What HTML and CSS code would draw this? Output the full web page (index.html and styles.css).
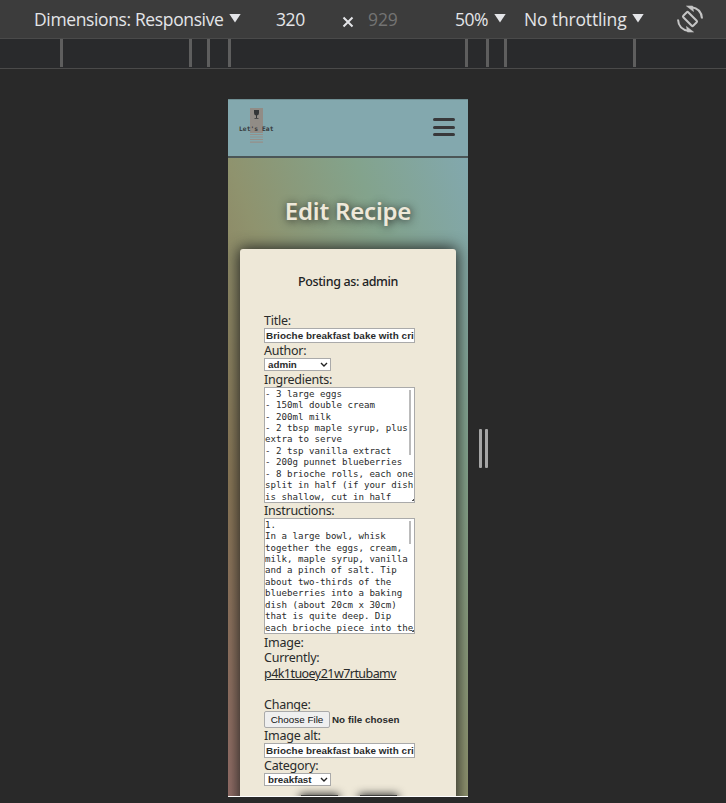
FILE: index.html
```
<!DOCTYPE html>
<html lang="en">
<head>
<meta charset="utf-8">
<title>Edit Recipe</title>
<link rel="stylesheet" href="styles.css">
</head>
<body>
<div class="toolbar">
  <span class="dims">Dimensions: Responsive</span><i class="tri"></i>
  <span class="width">320</span>
  <svg class="times" width="12" height="12" viewBox="0 0 12 12"><path d="M1.500 1.500l9 9M10.500 1.500l-9 9" stroke="#e4e5e8" stroke-width="2"/></svg>
  <span class="height">929</span>
  <span class="scale">50%</span><i class="tri"></i>
  <span class="throttle">No throttling</span><i class="tri"></i>
  <svg class="rotate" width="28" height="28" viewBox="0 0 28 28" fill="none" stroke="#c5c5c5" stroke-width="2"><rect x="10.500" y="7" width="7" height="14" rx="1" transform="rotate(-45 14 14)"/><path d="M2 14.500Q2.500 24.500 13 26M26 13.500Q25.500 3.500 15 2"/><path d="M10.500 21.500l7 5.500h-6zM17.500 6.500l-7-5.500h6z" fill="#c5c5c5" stroke-width=".6"/></svg>
</div>
<div class="ruler"><i></i><i></i><i></i><i></i><i></i><i></i><i></i><i></i></div>
<div class="stage">
  <div class="phone">
    <header class="nav">
      <svg class="logo" width="36" height="36" viewBox="0 0 36 36"><path d="M11 0h13v25H11z" fill="#918c86"/><path d="M11 26.500h13M11 29h13M11 31.500h13M11 34.200h13" stroke="#968f89" stroke-width="1.200"/><path d="M15 2h5v3q0 2-2 2.500V10h1.500v.8h-4V10H17V7.500q-2-.5-2-2.500z" fill="#343738"/><text x="0" y="22.500" textLength="34.500">Let's Eat</text></svg>
      <div class="burger"><i></i><i></i><i></i></div>
    </header>
    <main class="page">
      <h1><span>Edit Recipe</span></h1>
      <form class="card">
        <p class="posting">Posting as: admin</p>
        <label>Title:</label>
        <div class="field">Brioche breakfast bake with cri</div>
        <label>Author:</label>
        <div class="select">admin<svg width="8" height="6" viewBox="0 0 8 6"><path d="M1 1l3 3 3-3" fill="none" stroke="#222" stroke-width="1.400"/></svg></div>
        <label class="ingredients">Ingredients:</label>
        <div class="area">- 3 large eggs
- 150ml double cream
- 200ml milk
- 2 tbsp maple syrup, plus
extra to serve
- 2 tsp vanilla extract
- 200g punnet blueberries
- 8 brioche rolls, each one
split in half (if your dish
is shallow, cut in half<i class="thumb long"></i><i class="grip"></i></div>
        <label>Instructions:</label>
        <div class="area">1.
In a large bowl, whisk
together the eggs, cream,
milk, maple syrup, vanilla
and a pinch of salt. Tip
about two-thirds of the
blueberries into a baking
dish (about 20cm x 30cm)
that is quite deep. Dip
each brioche piece into the<i class="thumb"></i><i class="grip"></i></div>
        <label class="image">Image:</label>
        <label>Currently:</label>
        <a class="file-link">p4k1tuoey21w7rtubamv</a>
        <label class="change">Change:</label>
        <div class="file"><span class="choose">Choose File</span><span class="nofile">No file chosen</span></div>
        <label>Image alt:</label>
        <div class="field">Brioche breakfast bake with cri</div>
        <label>Category:</label>
        <div class="select">breakfast<svg width="8" height="6" viewBox="0 0 8 6"><path d="M1 1l3 3 3-3" fill="none" stroke="#222" stroke-width="1.400"/></svg></div>
        <div class="buttons"><i></i><i></i></div>
      </form>
    </main>
  </div>
  <div class="handle"><i></i><i></i></div>
</div>
</body>
</html>
```
FILE: styles.css
```
* { box-sizing: border-box; }
body { margin: 0; width: 726px; height: 803px; overflow: hidden; background: #292929; }
.toolbar { height: 38px; background: #3c3c3c; display: flex; align-items: center; color: #e4e5e8; font: 17.5px/38px "Open Sans", sans-serif; white-space: nowrap; }
.toolbar span { flex: none; }
.toolbar svg { flex: none; }
.dims { width: 190px; margin-left: 34px; letter-spacing: -.37px; }
.tri { flex: none; width: 12px; height: 9px; margin: 0 0 2px 5px; background: #e4e5e8; clip-path: polygon(0 0, 100% 0, 50% 100%); }
.width { width: 30px; margin-left: 35px; letter-spacing: -.4px; }
.times { margin: 6px 0 0 36px; }
.height { width: 31px; margin-left: 14px; color: #737373; letter-spacing: -.1px; }
.scale { width: 34px; margin-left: 56px; letter-spacing: -.5px; }
.throttle { width: 103px; margin-left: 18px; letter-spacing: -.15px; }
.rotate { margin-left: 32px; }
.ruler { height: 31px; border-top: 1px solid #4a4a4a; border-bottom: 1px solid #4a4a4a; background: #292a2c; display: flex; }
.ruler i { width: 3px; height: 28px; background: #5e5e5e; flex: none; margin-left: 15px; }
.ruler i:nth-child(1) { margin-left: 60px; }
.ruler i:nth-child(2) { margin-left: 126px; }
.ruler i:nth-child(4) { margin-left: 18px; }
.ruler i:nth-child(5) { margin-left: 234px; }
.ruler i:nth-child(6) { margin-left: 18px; }
.ruler i:nth-child(8) { margin-left: 126px; }
.stage { display: flex; padding: 30px 0 0 228px; }
.phone { width: 240px; height: 698px; overflow: hidden; border-bottom: 1px solid #fff; color: #292b2b; font-family: "Noto Sans", sans-serif; }
.nav { height: 59px; background: #83a8ae; border-top: 1px solid #6f8f93; border-bottom: 2px solid #4b5657; display: flex; justify-content: space-between; padding: 8px 13px 0 11px; }
.logo text { font: bold 6.3px "DejaVu Sans Mono", monospace; fill: #343738; }
.burger { width: 22px; display: flex; flex-direction: column; gap: 4.500px; padding-top: 10px; }
.burger i { height: 3px; border-radius: 2px; background: #38383a; flex: none; }
.page { height: 639px; padding: 0 12px; background: linear-gradient(to top right, #946e68 0%, #8b7857 25%, #8f936e 50%, #83a38c 76%, #82a8ae 100%); }
h1 { height: 91px; margin: 0; padding-top: 35px; text-align: center; font-size: 24px; line-height: 36px; font-weight: 600; color: #eee8d9; text-shadow: 1px 1px 8px #222; letter-spacing: -.2px; white-space: nowrap; }
.card { height: 700px; margin: 0; padding: 25px 41px 0 24px; background: #eee8d8; border-radius: 3px; box-shadow: 0 0 15px 1px #202020; font-size: 12.500px; }
.posting { height: 39px; width: 168px; margin: 0; line-height: 16px; text-align: center; color: #202223; font-weight: 500; letter-spacing: -.35px; }
label { display: block; height: 15px; line-height: 15px; letter-spacing: -.25px; }
.field { width: 151px; height: 15px; border: 1px solid #aaa; background: #fff; padding-left: 1px; overflow: hidden; white-space: nowrap; font: bold 9.900px/14px "Liberation Sans", sans-serif; letter-spacing: .06px; }
.select { width: 67px; height: 13px; border: 1px solid #aaa; background: #fff; display: flex; justify-content: space-between; align-items: center; padding: 0 2px 0 3px; font: bold 9.800px/12px "Liberation Sans", sans-serif; }
.ingredients { height: 16px; line-height: 17px; }
.area { position: relative; width: 151px; height: 116px; border: 1px solid #aaa; background: #fff; white-space: pre; overflow: hidden; font: 9.140px/11.450px "DejaVu Sans Mono", monospace; padding-top: .6px; }
.thumb { position: absolute; top: 2px; right: 3px; width: 2px; height: 23px; background: #bbb; }
.long { height: 65px; }
.grip { position: absolute; right: 0; bottom: 1px; width: 3px; height: 3px; background: linear-gradient(135deg, transparent 55%, #555 55%); }
.image { height: 16px; line-height: 17px; }
.file-link { display: block; height: 32px; line-height: 17px; text-decoration: underline; letter-spacing: -.55px; white-space: nowrap; }
.change { height: 14px; }
.file { height: 17px; display: flex; align-items: center; white-space: nowrap; font: 9.900px/15px "Liberation Sans", sans-serif; }
.choose { width: 66px; height: 17px; border: 1px solid #aaa; border-radius: 2px; background: #efefef; text-align: center; color: #111; }
.nofile { margin-left: 2px; font-weight: bold; font-size: 9.800px; letter-spacing: .05px; }
.buttons { display: flex; gap: 22px; padding: 9px 0 0 37px; }
.buttons i { width: 37px; flex: none; height: 16px; background: #403f3d; box-shadow: 0 0 8px 1px #333; }
.handle { display: flex; gap: 3px; margin: 330px 0 0 11px; height: 39px; }
.handle i { width: 3px; border-radius: 1px; background: #a6a6a6; }
```
